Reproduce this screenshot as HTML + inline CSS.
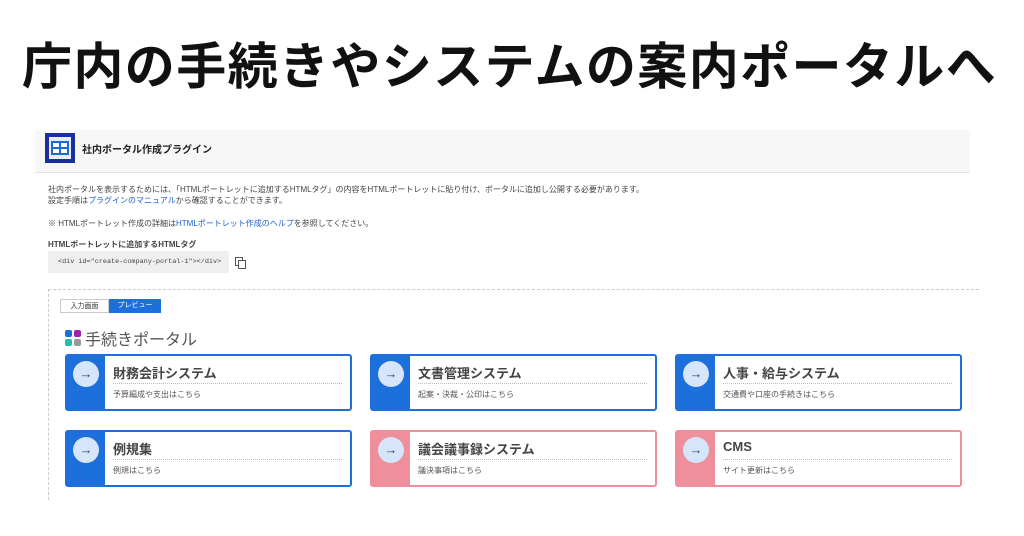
<!DOCTYPE html><html><head><meta charset="utf-8"><style>
body{margin:0;width:1024px;height:536px;background:#fff;font-family:"Liberation Sans","Noto Sans CJK JP",sans-serif;position:relative;overflow:hidden;color:#333}
.a{position:absolute}
.title{left:22px;top:32px;white-space:nowrap;font-size:50px;font-weight:bold;color:#111;letter-spacing:1.4px;line-height:70px}
.hdr{left:35px;top:130px;width:935px;height:42px;background:#f7f7f7;border-bottom:1px solid #e4e4e4}
.t{font-size:8px;color:#444;white-space:nowrap}
.l{color:#1a5fd0}
.card{position:absolute;width:287px;height:57px;border:2px solid #1d6fdc;border-radius:3px;box-sizing:border-box;background:#fff}
.card .band{position:absolute;left:0;top:0;bottom:0;width:38px;background:#1d6fdc}
.card .c{position:absolute;left:6px;top:5px;width:26px;height:26px;border-radius:50%;background:#d5e5fa;text-align:center;line-height:26px;font-size:13px;color:#444;font-weight:bold}
.card .h{position:absolute;left:46px;top:7px;font-size:13px;font-weight:bold;color:#444}
.card .hr{position:absolute;left:46px;right:8px;top:27px;border-top:1px dotted #bbb}
.card .s{position:absolute;left:46px;top:33px;font-size:8px;color:#555}
.pink{border-color:#ef8f9c}.pink .band{background:#ef8f9c}
</style></head><body>
<div class="a title">庁内の手続きやシステムの案内ポータルへ</div>
<div class="a hdr"></div>
<div class="a" style="left:45px;top:133px;width:30px;height:30px;background:#1a2f9e"></div>
<div class="a" style="left:49px;top:137px;width:22px;height:22px;background:#e8ecf8"></div>
<div class="a" style="left:51px;top:141px;width:18px;height:14px;background:#1a6ad8"></div>
<div class="a" style="left:53px;top:143px;width:6px;height:4px;background:#fff"></div><div class="a" style="left:61px;top:143px;width:6px;height:4px;background:#fff"></div><div class="a" style="left:53px;top:149px;width:6px;height:4px;background:#fff"></div><div class="a" style="left:61px;top:149px;width:6px;height:4px;background:#fff"></div>
<div class="a" style="left:82px;top:141px;font-size:10px;font-weight:bold;color:#222">社内ポータル作成プラグイン</div>
<div class="a t" style="left:48px;top:184px">社内ポータルを表示するためには、「HTMLポートレットに追加するHTMLタグ」の内容をHTMLポートレットに貼り付け、ポータルに追加し公開する必要があります。</div>
<div class="a t" style="left:48px;top:195px">設定手順は<span class="l">プラグインのマニュアル</span>から確認することができます。</div>
<div class="a t" style="left:48px;top:218px">※ HTMLポートレット作成の詳細は<span class="l">HTMLポートレット作成のヘルプ</span>を参照してください。</div>
<div class="a t" style="left:48px;top:239px;font-weight:bold">HTMLポートレットに追加するHTMLタグ</div>
<div class="a" style="left:48px;top:251px;width:181px;height:22px;background:#efefef;font-family:'Liberation Mono',monospace;font-size:6.8px;line-height:22px;text-indent:10px;color:#444;white-space:nowrap">&lt;div id="create-company-portal-1"&gt;&lt;/div&gt;</div>
<div class="a" style="left:235px;top:257px;width:6px;height:7px;border:1px solid #555;background:#fff"></div><div class="a" style="left:238px;top:260px;width:6px;height:7px;border:1px solid #555;background:#fff"></div>
<div class="a" style="left:48px;top:289px;width:930px;height:210px;border-left:1px dashed #ccc;border-top:1px dashed #ccc"></div>
<div class="a" style="left:60px;top:299px;width:49px;height:14px;border:1px solid #ccc;font-size:7px;line-height:14px;text-align:center;box-sizing:border-box">入力画面</div>
<div class="a" style="left:109px;top:299px;width:52px;height:14px;background:#1d6fdc;color:#fff;font-size:7px;line-height:14px;text-align:center">プレビュー</div>
<div class="a" style="left:65px;top:330px;width:7px;height:7px;background:#1d6fdc;border-radius:2px"></div><div class="a" style="left:74px;top:330px;width:7px;height:7px;background:#a020b0;border-radius:2px"></div>
<div class="a" style="left:65px;top:339px;width:7px;height:7px;background:#20c0b0;border-radius:2px"></div><div class="a" style="left:74px;top:339px;width:7px;height:7px;background:#999;border-radius:2px"></div>
<div class="a" style="left:85px;top:326px;font-size:16px;color:#555">手続きポータル</div>
<div class="card" style="left:65px;top:354px"><div class="band"></div><div class="c">→</div><div class="h">財務会計システム</div><div class="hr"></div><div class="s">予算編成や支出はこちら</div></div>
<div class="card" style="left:370px;top:354px"><div class="band"></div><div class="c">→</div><div class="h">文書管理システム</div><div class="hr"></div><div class="s">起案・決裁・公印はこちら</div></div>
<div class="card" style="left:675px;top:354px"><div class="band"></div><div class="c">→</div><div class="h">人事・給与システム</div><div class="hr"></div><div class="s">交通費や口座の手続きはこちら</div></div>
<div class="card" style="left:65px;top:430px"><div class="band"></div><div class="c">→</div><div class="h">例規集</div><div class="hr"></div><div class="s">例規はこちら</div></div>
<div class="card pink" style="left:370px;top:430px"><div class="band"></div><div class="c">→</div><div class="h">議会議事録システム</div><div class="hr"></div><div class="s">議決事項はこちら</div></div>
<div class="card pink" style="left:675px;top:430px"><div class="band"></div><div class="c">→</div><div class="h">CMS</div><div class="hr"></div><div class="s">サイト更新はこちら</div></div>
</body></html>
